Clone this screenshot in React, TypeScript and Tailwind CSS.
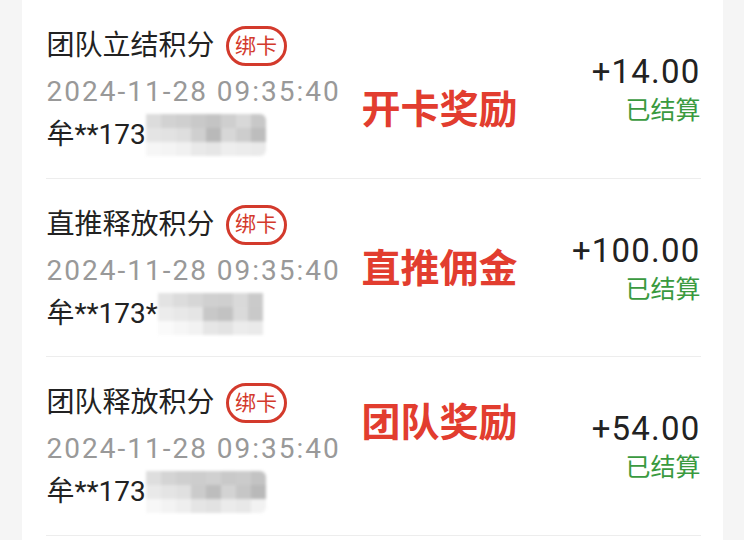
import React from "react";

type Row = {
  title: string;
  amount: string;
  label: string;
  labelTop: string;
  nameTail: string;
  mosaic: string[][];
};

const M1 = [
  ["#dcdcdc", "#d2d2d2", "#cfcfcf", "#c9c9c9", "#c4c4c4", "#cfcfcf", "#d8d8d8", "#c8c8c8"],
  ["#e4e4e4", "#e2e2e2", "#dedede", "#cfcfcf", "#b9b9b9", "#d7d7d7", "#cdcdcd", "#bdbdbd"],
  ["#f6f6f6", "#f4f4f4", "#f1f1f1", "#e9e9e9", "#e6e6e6", "#eeeeee", "#ececec", "#eaeaea"],
];
const M2 = [
  ["#e3e3e3", "#dcdcdc", "#d6d6d6", "#d0d0d0", "#cfcfcf", "#d9d9d9", "#cacaca", "#ffffff"],
  ["#ececec", "#e8e8e8", "#e5e5e5", "#c8c8c8", "#c2c2c2", "#dadada", "#c9c9c9", "#ffffff"],
  ["#fafafa", "#f6f6f6", "#f2f2f2", "#e6e6e6", "#e3e3e3", "#ececec", "#eaeaea", "#ffffff"],
];
const M3 = [
  ["#dedede", "#d4d4d4", "#cfcfcf", "#cdcdcd", "#d0d0d0", "#c9c9c9", "#cbcbcb", "#c3c3c3"],
  ["#e9e9e9", "#e4e4e4", "#e0e0e0", "#cbcbcb", "#bdbdbd", "#d3d3d3", "#c6c6c6", "#b9b9b9"],
  ["#f7f7f7", "#f3f3f3", "#eeeeee", "#e5e5e5", "#e2e2e2", "#ebebeb", "#e8e8e8", "#f2f2f2"],
];

const rows: Row[] = [
  { title: "团队立结积分", amount: "+14.00", label: "开卡奖励", labelTop: "top-[88px]", nameTail: "", mosaic: M1 },
  { title: "直推释放积分", amount: "+100.00", label: "直推佣金", labelTop: "top-[68px]", nameTail: "*", mosaic: M2 },
  { title: "团队释放积分", amount: "+54.00", label: "团队奖励", labelTop: "top-[44px]", nameTail: "", mosaic: M3 },
];

function Mosaic({ cells }: { cells: string[][] }) {
  return (
    <span className="inline-flex flex-col w-[120px] h-[42px] blur-[1.5px] overflow-hidden rounded-r-[6px]">
      {cells.map((r, i) => (
        <span key={i} className="flex flex-1">
          {r.map((c, j) => (
            <span key={j} className="flex-1" style={{ backgroundColor: c }} />
          ))}
        </span>
      ))}
    </span>
  );
}

export default function App() {
  return (
    <div
      className="w-[744px] h-[540px] overflow-hidden bg-[#f5f5f5] flex justify-center"
      style={{ fontFamily: 'Roboto, "Noto Sans CJK SC", sans-serif' }}
    >
      <div className="w-[701px] h-full bg-white pl-[24px] pr-[22px]">
        {rows.map((r, i) => (
          <div
            key={i}
            className="relative h-[178.5px] border-b border-[#ededed] flex justify-between"
          >
            <div className="flex flex-col pt-[26px] pl-[1px]">
              <div className="flex items-center h-[40px]">
                <span className="text-[28px] leading-[40px] text-[#222222]">{r.title}</span>
                <span className="ml-[11px] w-[61px] h-[40px] rounded-full border-[3px] border-[#d33a2c] flex items-center justify-center text-[21px] leading-none text-[#d33a2c]">
                  绑卡
                </span>
              </div>
              <div className="mt-[5px] h-[42px] flex items-center text-[28px] text-[#999999] tracking-[2px]">
                2024-11-28 09:35:40
              </div>
              <div className="mt-[1px] h-[42px] flex items-center text-[28px] text-[#222222]">
                <span>牟**173{r.nameTail}</span>
                <Mosaic cells={r.mosaic} />
              </div>
            </div>
            <div
              className={`absolute left-[316px] ${r.labelTop} text-[39px] font-bold leading-[44px] text-[#e23d2f]`}
            >
              {r.label}
            </div>
            <div className="flex flex-col items-end pt-[51px]">
              <div className="h-[42px] flex items-center text-[33px] text-[#222222] tracking-[1.2px]">
                {r.amount}
              </div>
              <div className="h-[36px] flex items-center text-[25px] text-[#3a9a3f]">
                已结算
              </div>
            </div>
          </div>
        ))}
      </div>
    </div>
  );
}
